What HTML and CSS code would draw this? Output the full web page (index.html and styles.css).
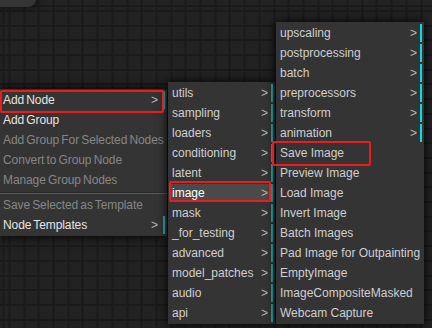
FILE: index.html
```html
<html lang="en">
<head>
    <meta charset="UTF-8">
    <meta name="viewport" content="width=device-width, initial-scale=1.0">
    <title>Node Context Menu</title>
    <link rel="stylesheet" href="styles.css">
</head>
<body>
    <div class="canvas">
        <div class="node-stub"></div>

        <!-- root canvas menu -->
        <div class="ctx-menu menu-root">
            <div class="entry has-sub">Add Node</div>
            <div class="entry">Add Group</div>
            <div class="entry disabled">Add Group For Selected Nodes</div>
            <div class="entry disabled">Convert to Group Node</div>
            <div class="entry disabled">Manage Group Nodes</div>
            <div class="separator"></div>
            <div class="entry disabled">Save Selected as Template</div>
            <div class="entry has-sub">Node Templates</div>
        </div>

        <!-- node categories -->
        <div class="ctx-menu menu-cats">
            <div class="entry has-sub">utils</div>
            <div class="entry has-sub">sampling</div>
            <div class="entry has-sub">loaders</div>
            <div class="entry has-sub">conditioning</div>
            <div class="entry has-sub">latent</div>
            <div class="entry has-sub hover">image</div>
            <div class="entry has-sub">mask</div>
            <div class="entry has-sub">_for_testing</div>
            <div class="entry has-sub">advanced</div>
            <div class="entry has-sub">model_patches</div>
            <div class="entry has-sub">audio</div>
            <div class="entry has-sub">api</div>
        </div>

        <!-- image nodes -->
        <div class="ctx-menu menu-image">
            <div class="entry has-sub">upscaling</div>
            <div class="entry has-sub">postprocessing</div>
            <div class="entry has-sub">batch</div>
            <div class="entry has-sub">preprocessors</div>
            <div class="entry has-sub">transform</div>
            <div class="entry has-sub">animation</div>
            <div class="entry">Save Image</div>
            <div class="entry">Preview Image</div>
            <div class="entry">Load Image</div>
            <div class="entry">Invert Image</div>
            <div class="entry">Batch Images</div>
            <div class="entry">Pad Image for Outpainting</div>
            <div class="entry">EmptyImage</div>
            <div class="entry">ImageCompositeMasked</div>
            <div class="entry">Webcam Capture</div>
        </div>

        <!-- annotation boxes -->
        <div class="mark mark-add-node"></div>
        <div class="mark mark-image"></div>
        <div class="mark mark-save"></div>
    </div>
</body>
</html>
```

FILE: styles.css
```css
:root {
    --canvas-bg: #222;
    --grid-line: #1a1a1a;
    --menu-bg: #343434;
    --entry-text: #cfcfcf;
    --entry-strong: #e4e4e4;
    --entry-disabled: #868686;
    --sub-bar: #14b3b6;
    --sub-bar-top: #00e1ea;
    --mark: #ea1c1c;
}

body {
    margin: 0;
    font-family: 'Liberation Sans', Arial, sans-serif;
    background: var(--canvas-bg);
}

.canvas {
    position: relative;
    width: 432px;
    height: 328px;
    overflow: hidden;
    background-color: var(--canvas-bg);
    background-image:
        repeating-linear-gradient(90deg, var(--grid-line) 0 2px, transparent 2px 14.7px),
        repeating-linear-gradient(180deg, var(--grid-line) 0 2px, transparent 2px 14.7px);
    background-position: 8.5px 0, 0 10px;
}

.node-stub {
    position: absolute;
    left: -20px;
    top: -20px;
    width: 56px;
    height: 27px;
    background: #353535;
    border-radius: 8px;
    box-shadow: 0 0 6px rgba(0,0,0,0.6);
}

.ctx-menu {
    position: absolute;
    background: var(--menu-bg);
    box-shadow: 0 0 10px black;
    font-size: 12px;
    display: flow-root;
}

.menu-root {
    left: -1px;
    top: 89px;
    width: 168px;
    z-index: 1;
}

.menu-cats {
    left: 168px;
    top: 82px;
    width: 107px;
    z-index: 2;
}

.menu-image {
    left: 276px;
    top: 22px;
    width: 148px;
    z-index: 3;
}

.entry {
    display: flex;
    justify-content: space-between;
    height: 18px;
    line-height: 18px;
    margin: 2px;
    padding: 0 3px 0 2px;
    color: var(--entry-text);
    white-space: nowrap;
}

.entry.has-sub {
    border-right: 2px solid var(--sub-bar);
}

.entry.has-sub::after {
    content: ">";
    color: #b8b8b8;
}

.menu-root .entry {
    color: var(--entry-strong);
    padding-right: 5px;
    word-spacing: -1px;
    letter-spacing: -0.1px;
}

.menu-root .entry.disabled {
    color: var(--entry-disabled);
}

.menu-image .entry.has-sub {
    border-right-color: var(--sub-bar-top);
}

.entry.hover {
    background: #4a4a4a;
    color: #fff;
}

.separator {
    height: 0;
    margin: 3px 0 2px;
    border-top: 1px solid #2a2a2a;
    border-bottom: 1px solid #5a5a5a;
}

.mark {
    position: absolute;
    border: 2px solid var(--mark);
    border-radius: 2px;
    box-sizing: border-box;
    z-index: 5;
}

.mark-add-node {
    left: 0;
    top: 90px;
    width: 164px;
    height: 23px;
}

.mark-image {
    left: 169px;
    top: 181px;
    width: 102px;
    height: 21px;
}

.mark-save {
    left: 272px;
    top: 141px;
    width: 99px;
    height: 25px;
}
```
